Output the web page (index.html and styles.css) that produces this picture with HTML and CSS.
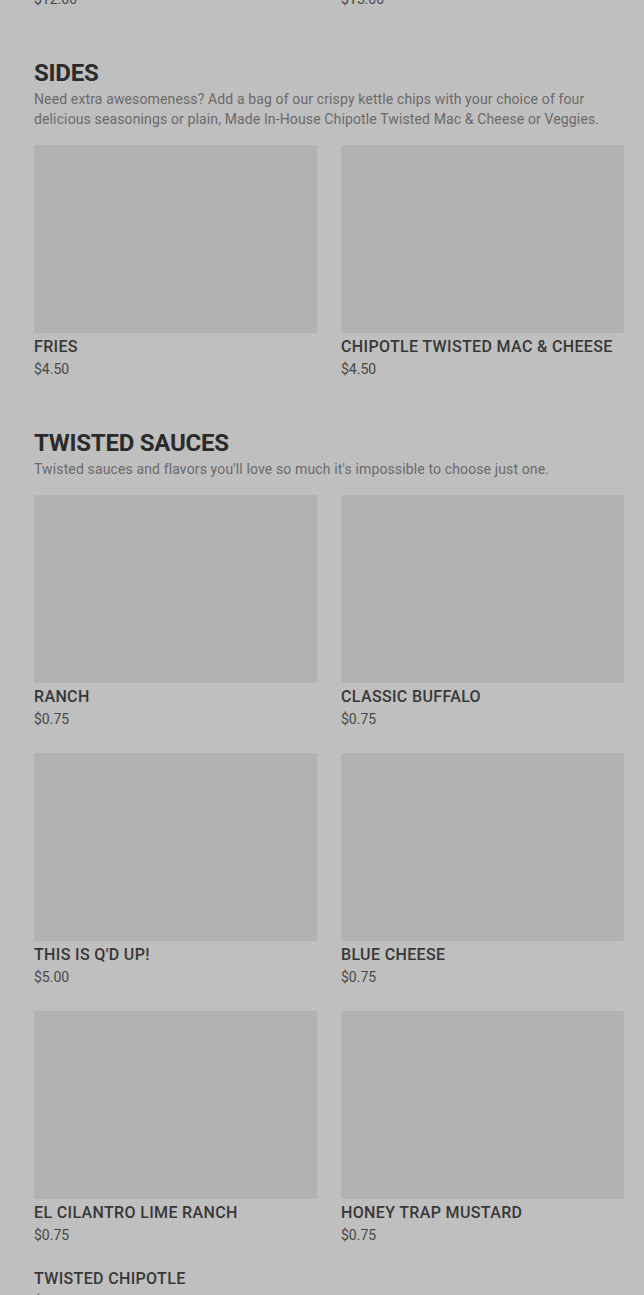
FILE: index.html
```html
<!DOCTYPE html>
<html lang="en">
<head>
<meta charset="utf-8">
<title>Menu</title>
<link rel="stylesheet" href="styles.css">
</head>
<body>
<main class="menu">
  <div class="grid top-row">
    <div class="card"><div class="price">$12.00</div></div>
    <div class="card"><div class="price">$15.00</div></div>
  </div>

  <section class="section">
    <h2 class="title">SIDES</h2>
    <p class="desc">Need extra awesomeness? Add a bag of our crispy kettle chips with your choice of four delicious seasonings or plain, Made In-House Chipotle Twisted Mac &amp; Cheese or Veggies.</p>
    <div class="grid">
      <div class="card"><div class="thumb"></div><div class="name">FRIES</div><div class="price">$4.50</div></div>
      <div class="card"><div class="thumb"></div><div class="name">CHIPOTLE TWISTED MAC &amp; CHEESE</div><div class="price">$4.50</div></div>
    </div>
  </section>

  <section class="section">
    <h2 class="title">TWISTED SAUCES</h2>
    <p class="desc">Twisted sauces and flavors you'll love so much it's impossible to choose just one.</p>
    <div class="grid">
      <div class="card"><div class="thumb"></div><div class="name">RANCH</div><div class="price">$0.75</div></div>
      <div class="card"><div class="thumb"></div><div class="name">CLASSIC BUFFALO</div><div class="price">$0.75</div></div>
      <div class="card"><div class="thumb"></div><div class="name">THIS IS Q'D UP!</div><div class="price">$5.00</div></div>
      <div class="card"><div class="thumb"></div><div class="name">BLUE CHEESE</div><div class="price">$0.75</div></div>
      <div class="card"><div class="thumb"></div><div class="name">EL CILANTRO LIME RANCH</div><div class="price">$0.75</div></div>
      <div class="card"><div class="thumb"></div><div class="name">HONEY TRAP MUSTARD</div><div class="price">$0.75</div></div>
      <div class="card no-thumb"><div class="name">TWISTED CHIPOTLE</div><div class="price">$0.75</div></div>
    </div>
  </section>
</main>
</body>
</html>
```

FILE: styles.css
```css
html, body {
  margin: 0;
  padding: 0;
  background: #bfbfbf;
}
body {
  font-family: "Roboto", "Liberation Sans", sans-serif;
  color: #333333;
  overflow: hidden;
  height: 1295px;
}
.menu {
  padding: 0 20px 0 34px;
  margin-top: -11px;
}
.grid {
  display: grid;
  grid-template-columns: 1fr 1fr;
  column-gap: 24px;
  row-gap: 24px;
}
.section {
  margin-top: 49px;
}
.title {
  margin: 0;
  font-size: 24px;
  line-height: 30px;
  font-weight: 700;
  letter-spacing: -0.25px;
  color: #2b2b2b;
}
.desc {
  margin: 1px 0 16px;
  font-size: 14px;
  line-height: 20px;
  letter-spacing: 0.13px;
  color: #6a6a6a;
}
.card {
  display: flex;
  flex-direction: column;
}
.thumb {
  height: 188px;
  background: #b2b2b2;
  border-radius: 2px;
}
.name {
  margin-top: 2px;
  font-size: 16px;
  line-height: 23px;
  font-weight: 500;
  color: #383838;
  letter-spacing: 0.35px;
}
.no-thumb .name {
  margin-top: -2px;
}
.price {
  margin-top: 1px;
  font-size: 14px;
  line-height: 20px;
  color: #484848;
}
.top-row .price {
  margin-top: 0;
}
```
